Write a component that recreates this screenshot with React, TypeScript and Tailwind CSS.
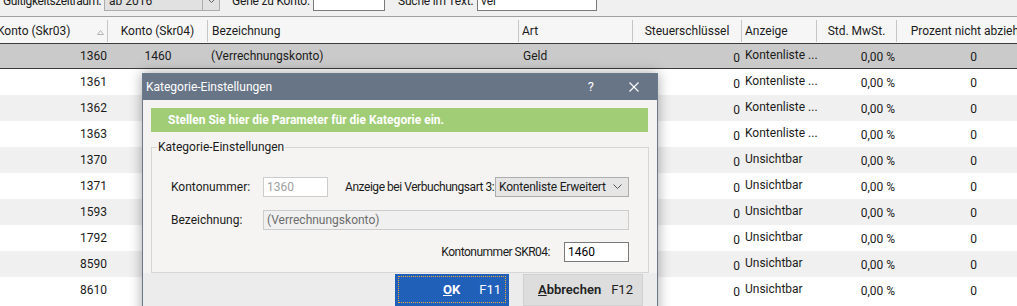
import React from 'react';

type Row = { a: string; b?: string; c?: string; d?: string; anz: string; sel?: boolean };

const rows: Row[] = [
  { a: '1360', b: '1460', c: '(Verrechnungskonto)', d: 'Geld', anz: 'Kontenliste ...', sel: true },
  { a: '1361', anz: 'Kontenliste ...' },
  { a: '1362', anz: 'Kontenliste ...' },
  { a: '1363', anz: 'Kontenliste ...' },
  { a: '1370', anz: 'Unsichtbar' },
  { a: '1371', anz: 'Unsichtbar' },
  { a: '1593', anz: 'Unsichtbar' },
  { a: '1792', anz: 'Unsichtbar' },
  { a: '8590', anz: 'Unsichtbar' },
  { a: '8610', anz: 'Unsichtbar' },
];

function Chevron({ color = '#606060' }: { color?: string }) {
  return (
    <svg width="9" height="5" viewBox="0 0 9 5">
      <polyline points="0.5,0.5 4.5,4.5 8.5,0.5" fill="none" stroke={color} strokeWidth="1" />
    </svg>
  );
}

export default function App() {
  return (
    <div className="relative w-[1017px] h-[306px] overflow-hidden bg-white font-['Segoe_UI',Roboto,sans-serif] text-[12px] leading-[16px] text-[#1b1b1b]">
      {/* toolbar */}
      <div className="h-[17px] overflow-hidden bg-[#f0f0f0] border-b border-[#a0a0a0]">
        <div className="-mt-[10px] h-[21px] flex items-center whitespace-nowrap">
          <span className="w-[104px] pl-[3px] tracking-[-0.4px]">Gültigkeitszeitraum:</span>
          <div className="w-[116px] h-[21px] flex border border-[#adadad] bg-[#e1e1e1]">
            <span className="flex-1 pl-[4px] flex items-center">ab 2016</span>
            <span className="w-[17px] border-l border-[#adadad] flex items-center justify-center">
              <Chevron />
            </span>
          </div>
          <span className="ml-[12px] w-[81px] tracking-[-0.2px]">Gehe zu Konto:</span>
          <div className="w-[72px] h-[21px] bg-white border border-[#7a7a7a]" />
          <span className="ml-[13px] w-[79px] tracking-[-0.2px]">Suche im Text:</span>
          <div className="w-[120px] h-[21px] bg-white border border-[#7a7a7a] pl-[3px] flex items-center">ver</div>
        </div>
      </div>

      {/* header */}
      <div className="grid grid-cols-[108px_100px_311px_114px_109px_75px_80px_153px] h-[26px] bg-[#f6f6f6] whitespace-nowrap">
        <div className="mt-[3px] mb-[1px] border-r border-[#c6c6c6] flex items-center justify-between">
          <span className="-ml-[3px]">Konto (Skr03)</span>
          <svg width="7" height="5" viewBox="0 0 7 5" className="mr-[3px] mt-[3px]">
            <polygon points="3.5,0.5 6.5,4.5 0.5,4.5" fill="none" stroke="#b4b4b4" strokeWidth="1" />
          </svg>
        </div>
        <div className="mt-[3px] mb-[1px] border-r border-[#c6c6c6] flex items-center justify-center">Konto (Skr04)</div>
        <div className="mt-[3px] mb-[1px] border-r border-[#c6c6c6] flex items-center pl-[4px]">Bezeichnung</div>
        <div className="mt-[3px] mb-[1px] border-r border-[#c6c6c6] flex items-center pl-[3px]">Art</div>
        <div className="mt-[3px] mb-[1px] border-r border-[#c6c6c6] flex items-center justify-center">Steuerschlüssel</div>
        <div className="mt-[3px] mb-[1px] border-r border-[#c6c6c6] flex items-center pl-[3px]">Anzeige</div>
        <div className="mt-[3px] mb-[1px] border-r border-[#c6c6c6] flex items-center justify-center">Std. MwSt.</div>
        <div className="mt-[3px] mb-[1px] flex items-center justify-center">Prozent nicht abziehbar</div>
      </div>

      {/* rows */}
      {rows.map((r, i) => (
        <div
          key={r.a}
          className={`grid grid-cols-[108px_100px_311px_114px_109px_75px_80px_153px] h-[26px] whitespace-nowrap ${
            r.sel ? 'bg-[#cacaca] border-y border-[#3a3a3a]' : i % 2 === 0 ? 'bg-[#f0f0f0]' : 'bg-white'
          }`}
        >
          <div className="flex items-center justify-end pr-[1px]">{r.a}</div>
          <div className="flex items-center justify-center">{r.b ?? ''}</div>
          <div className="flex items-center pl-[3px]">{r.c ?? ''}</div>
          <div className="flex items-center pl-[4px]">{r.d ?? ''}</div>
          <div className="flex items-center justify-end pr-[2px] pt-[3px]">0</div>
          <div className="flex items-center pl-[3px] pb-[3px]">{r.anz}</div>
          <div className="flex items-center justify-end pr-[2px] pt-[1px]">0,00 %</div>
          <div className="flex items-center justify-center pt-[1px]">0</div>
        </div>
      ))}

      {/* dialog */}
      <div className="absolute left-[142px] top-[73px] w-[516px] h-[260px] border border-[#6a798d] bg-[#ececec] shadow-[0_0_12px_rgba(0,0,0,0.35)] flex flex-col">
        <div className="h-[26px] bg-[#677587] text-white flex items-center whitespace-nowrap">
          <span className="pl-[3px] flex-1">Kategorie-Einstellungen</span>
          <span className="mr-[35px] text-[13px]">?</span>
          <svg width="10" height="10" viewBox="0 0 10 10" className="mr-[18px]">
            <line x1="0.5" y1="0.5" x2="9.5" y2="9.5" stroke="white" strokeWidth="1.1" />
            <line x1="9.5" y1="0.5" x2="0.5" y2="9.5" stroke="white" strokeWidth="1.1" />
          </svg>
        </div>
        <div className="bg-[#f4f3f1] pl-[8px] pr-[9px] pt-[8px]">
          <div className="h-[24px] bg-[#a0cd76] text-white font-bold flex items-center pl-[17px] whitespace-nowrap">
            Stellen Sie hier die Parameter für die Kategorie ein.
          </div>
          <fieldset className="mt-[7px] border border-[#d6d6d6] bg-[#f5f4f2] pl-[19px] pr-[19px] pb-[10px]">
            <legend className="-ml-[14px] px-[1px] leading-[16px]">Kategorie-Einstellungen</legend>
            <div className="mt-[21px] flex items-center h-[21px] whitespace-nowrap">
              <span className="w-[92px]">Kontonummer:</span>
              <div className="w-[65px] h-[20px] bg-white border border-[#cccccc] text-[#a0a0a0] pl-[3px] flex items-center">1360</div>
              <span className="ml-[17px] w-[150px] tracking-[-0.45px]">Anzeige bei Verbuchungsart 3:</span>
              <div className="w-[134px] h-[20px] bg-[#e5e5e5] border border-[#adadad] flex items-center justify-between pl-[3px] pr-[6px]">
                <span className="tracking-[-0.2px]">Kontenliste Erweitert</span>
                <Chevron color="#555" />
              </div>
            </div>
            <div className="mt-[13px] flex items-center h-[20px] whitespace-nowrap">
              <span className="w-[92px]">Bezeichnung:</span>
              <div className="w-[366px] h-[20px] bg-[#f0f0f0] border border-[#cccccc] text-[#6d6d6d] pl-[3px] flex items-center">(Verrechnungskonto)</div>
            </div>
            <div className="mt-[12px] flex items-center justify-end h-[20px] whitespace-nowrap">
              <span className="tracking-[-0.5px]">Kontonummer SKR04:</span>
              <div className="ml-[14px] w-[65px] h-[20px] bg-white border border-[#7a7a7a] text-black pl-[3px] flex items-center">1460</div>
            </div>
          </fieldset>
        </div>
        <div className="mt-[1px] flex justify-end gap-[14px] pr-[14px]">
          <div className="relative w-[114px] h-[32px] bg-[#2160b9] text-white flex items-center pl-[48px] whitespace-nowrap">
            <div className="absolute left-[3px] top-[2px] right-[3px] bottom-[3px] border border-dotted border-[#f0a83a]" />
            <span className="font-bold text-[13px]"><span className="underline">O</span>K</span>
            <span className="ml-[19px] text-[13px]">F11</span>
          </div>
          <div className="w-[120px] h-[32px] bg-[#dddddd] border border-[#d0d0d0] text-[#222] flex items-center pl-[14px] whitespace-nowrap">
            <span className="font-semibold text-[13px]"><span className="underline">A</span>bbrechen</span>
            <span className="ml-[10px] text-[13px]">F12</span>
          </div>
        </div>
      </div>
    </div>
  );
}
